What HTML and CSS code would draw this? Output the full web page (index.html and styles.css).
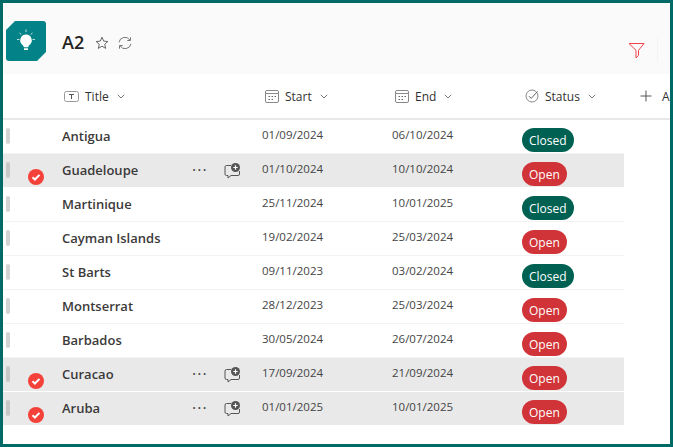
FILE: index.html
```html
<!DOCTYPE html>
<html lang="en">
<head>
<meta charset="utf-8">
<title>A2</title>
<link rel="stylesheet" href="styles.css">
</head>
<body>
<svg class="defs" width="0" height="0" aria-hidden="true">
  <defs>
    <symbol id="cal" viewBox="0 0 14 14"><rect x=".5" y="1.500" width="13" height="12" rx="1.500" fill="none" stroke="#888"/><path d="M1 4.500h12" stroke="#888"/><path d="M3.500 7.500h1.500M6.500 7.500h1.500M9.500 7.500h1.500M3.500 10.500h1.500M6.500 10.500h1.500" stroke="#666"/></symbol>
    <symbol id="chev" viewBox="0 0 8 5"><path d="M.8.8 4 4l3.200-3.200" fill="none" stroke="#777"/></symbol>
    <symbol id="bubble" viewBox="0 0 17 16"><path d="M7 2.500H2.500a1.500 1.500 0 0 0-1.500 1.500v7a1.500 1.500 0 0 0 1.500 1.500H4v2.500l3-2.500h7a1.500 1.500 0 0 0 1.500-1.500V8" fill="none" stroke="#555"/><circle cx="11.500" cy="4.500" r="4.500" fill="#555"/><path d="M9.300 4.500h4.400M11.500 2.300v4.400" stroke="#fff" stroke-width="1.200"/></symbol>
    <symbol id="check" viewBox="0 0 16 16"><circle cx="8" cy="8" r="8" fill="#f4413a"/><path d="M4.500 8.300l2.400 2.200 4.600-4.600" fill="none" stroke="#fff" stroke-width="2"/></symbol>
  </defs>
</svg>
<div class="frame">
  <header class="head">
    <div class="logo">
      <svg width="28" height="28" viewBox="0 0 28 28"><path d="M14 7.500a5.800 5.800 0 0 0-3.500 10.400c.9.800 1.200 1.500 1.300 2.300h4.400c.1-.8.400-1.500 1.300-2.300A5.800 5.800 0 0 0 14 7.500z" fill="#fff"/><path d="M12 21.200h4v1.800h-4z" fill="#fff"/><path d="M14 2.500v2.500M5 12.500h2.500M20.500 12.500H23M7.500 6l1.800 1.500M20.500 6l-1.800 1.500" stroke="#bfdede"/></svg>
    </div>
    <h1 class="name">A2</h1>
    <svg class="star" width="14" height="14" viewBox="0 0 14 14"><path d="M7 1.200l1.700 3.900 4.200.4-3.200 2.800 1 4.100L7 10.200l-3.700 2.200 1-4.100L1.100 5.500l4.200-.4z" fill="none" stroke="#666"/></svg>
    <svg class="sync" width="14" height="14" viewBox="0 0 14 14"><path d="M1 6.200A6 6 0 0 1 12 4.200M13 7.800A6 6 0 0 1 2 9.800" fill="none" stroke="#777"/><path d="M12.500 1.300v3.200H9.300M1.500 12.700V9.500h3.200" fill="none" stroke="#777"/></svg>
    <svg class="filter" width="17" height="17" viewBox="0 0 17 17"><path d="M1 1.500h15l-5.500 6.800v5L8 16v-7.700z" fill="none" stroke="#f0434a"/></svg>
    <span class="rule"></span>
  </header>

  <div class="cols">
    <div class="col col-title">
      <svg width="15" height="13" viewBox="0 0 15 13"><rect x=".5" y="1.500" width="14" height="10" rx="2" fill="none" stroke="#999"/><path d="M5 4.500h5M7.500 4.500v4.500" stroke="#555"/></svg>
      <span>Title</span><svg class="ch" width="8" height="5"><use href="#chev"/></svg>
    </div>
    <div class="col col-start">
      <svg width="14" height="14"><use href="#cal"/></svg><span>Start</span><svg class="ch" width="8" height="5"><use href="#chev"/></svg>
    </div>
    <div class="col col-end">
      <svg width="14" height="14"><use href="#cal"/></svg><span>End</span><svg class="ch" width="8" height="5"><use href="#chev"/></svg>
    </div>
    <div class="col col-status">
      <svg width="14" height="14" viewBox="0 0 14 14"><circle cx="7" cy="7" r="6" fill="none" stroke="#888"/><path d="M4 7.200l2.200 2.200L12.500 2.500" fill="none" stroke="#666"/></svg>
      <span>Status</span><svg class="ch" width="8" height="5"><use href="#chev"/></svg>
    </div>
    <div class="col col-add">
      <svg width="12" height="12" viewBox="0 0 12 12"><path d="M6 .5v11M.5 6h11" stroke="#555"/></svg><span>Add column</span>
    </div>
  </div>

  <div class="rows">
    <div class="row"><span class="grip"></span><span class="t">Antigua</span><span class="d">01/09/2024</span><span class="d">06/10/2024</span><span class="pill closed">Closed</span></div>
    <div class="row sel"><span class="grip"></span><svg class="ok" width="16" height="16"><use href="#check"/></svg><span class="t">Guadeloupe</span><span class="dots">···</span><svg class="bb" width="17" height="16"><use href="#bubble"/></svg><span class="d">01/10/2024</span><span class="d">10/10/2024</span><span class="pill open">Open</span></div>
    <div class="row"><span class="grip"></span><span class="t">Martinique</span><span class="d">25/11/2024</span><span class="d">10/01/2025</span><span class="pill closed">Closed</span></div>
    <div class="row"><span class="grip"></span><span class="t">Cayman Islands</span><span class="d">19/02/2024</span><span class="d">25/03/2024</span><span class="pill open">Open</span></div>
    <div class="row"><span class="grip"></span><span class="t">St Barts</span><span class="d">09/11/2023</span><span class="d">03/02/2024</span><span class="pill closed">Closed</span></div>
    <div class="row"><span class="grip"></span><span class="t">Montserrat</span><span class="d">28/12/2023</span><span class="d">25/03/2024</span><span class="pill open">Open</span></div>
    <div class="row"><span class="grip"></span><span class="t">Barbados</span><span class="d">30/05/2024</span><span class="d">26/07/2024</span><span class="pill open">Open</span></div>
    <div class="row sel"><span class="grip"></span><svg class="ok" width="16" height="16"><use href="#check"/></svg><span class="t">Curacao</span><span class="dots">···</span><svg class="bb" width="17" height="16"><use href="#bubble"/></svg><span class="d">17/09/2024</span><span class="d">21/09/2024</span><span class="pill open">Open</span></div>
    <div class="row sel"><span class="grip"></span><svg class="ok" width="16" height="16"><use href="#check"/></svg><span class="t">Aruba</span><span class="dots">···</span><svg class="bb" width="17" height="16"><use href="#bubble"/></svg><span class="d">01/01/2025</span><span class="d">10/01/2025</span><span class="pill open">Open</span></div>
  </div>
</div>
</body>
</html>
```

FILE: styles.css
```css
* { box-sizing: border-box; }
html, body { margin: 0; padding: 0; }
body { width: 673px; height: 447px; overflow: hidden; background: #fff; font-family: "Open Sans", "Noto Sans", sans-serif; color: #323130; }
.defs { display: block; height: 0; }
.frame { width: 673px; height: 447px; border: 3px solid #006b66; overflow: hidden; background: #fff; }

.head { position: relative; height: 71px; background: #fafafa; display: flex; align-items: flex-start; }
.logo { width: 40px; height: 40px; margin: 18px 0 0 3px; background: #038387; border-radius: 3px; display: flex; align-items: center; justify-content: center; clip-path: polygon(9px 0, 100% 0, 100% 31px, 31px 100%, 0 100%, 0 9px); flex: none; }
.name { margin: 27px 0 0 16px; font-size: 18px; line-height: 24px; font-weight: 600; color: #252423; }
.star { margin: 33px 0 0 11px; }
.sync { margin: 33px 0 0 9px; }
.filter { position: absolute; left: 625px; top: 39px; }
.rule { position: absolute; left: 654px; top: 35px; width: 1px; height: 24px; background: #f3f3f3; }

.cols { height: 46px; border-bottom: 2px solid #e8e8e8; display: flex; align-items: center; font-size: 12px; color: #323130; white-space: nowrap; }
.col { display: flex; align-items: center; flex: none; }
.col svg { flex: none; }
.col .ch { margin-left: 8px; }
.col-title { width: 262px; padding-left: 61px; }
.col-title span { margin-left: 6px; }
.col-start { width: 130px; }
.col-end { width: 130px; }
.col-start span, .col-end span, .col-status span { margin-left: 6px; }
.col-status { width: 115px; }
.col-add span { margin-left: 10px; }

.row { position: relative; width: 621px; height: 34px; display: grid; grid-template-columns: 59px 130px 70px 130px 130px 102px; align-items: start; border-bottom: 1px solid #f3f3f3; }
.row.sel { background: #e9e9e9; border-bottom: 1px solid #fff; }
.t { grid-column: 2; grid-row: 1; padding-top: 7px; font-size: 13px; line-height: 19px; font-weight: 600; color: #3b3a39; white-space: nowrap; }
.d { grid-row: 1; padding-top: 6px; font-size: 11.500px; line-height: 17px; color: #444; }
.d:nth-last-child(3) { grid-column: 4; }
.d:nth-last-child(2) { grid-column: 5; }
.pill { grid-column: 6; grid-row: 1; justify-self: start; margin-top: 8px; height: 24px; line-height: 25px; padding: 0 7px; border-radius: 12px; font-size: 12px; color: #fff; }
.closed { background: #006152; }
.open { background: #d13438; }

.grip { position: absolute; left: 3px; top: 8px; width: 4px; height: 16px; border-radius: 2px; background: #d4d4d4; }
.sel .grip { background: #c8c8c8; }
.ok { grid-column: 1; grid-row: 1; margin: 15px 0 0 25px; }
.dots { grid-column: 3; grid-row: 1; padding-top: 6px; font-size: 16px; line-height: 20px; letter-spacing: 1px; color: #444; }
.bb { grid-column: 3; grid-row: 1; margin: 9px 0 0 32px; }
```
